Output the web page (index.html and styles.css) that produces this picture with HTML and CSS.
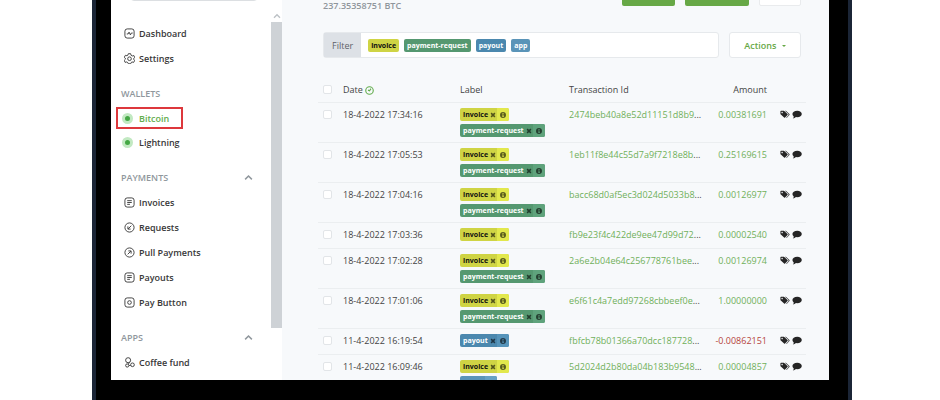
FILE: index.html
```html
<!DOCTYPE html>
<html lang="en">
<head>
<meta charset="utf-8">
<title>Bitcoin wallet</title>
<link rel="stylesheet" href="styles.css">
</head>
<body>
<svg class="defs" aria-hidden="true">
  <symbol id="i-dash" viewBox="0 0 24 24"><rect x="2" y="2" width="20" height="20" rx="5"/><path d="M6 13h3l2-4 3 6 2-4h3"/></symbol>
  <symbol id="i-gear" viewBox="0 0 24 24"><path d="M9.500 1.500h5l1 3.500 2.500 1.500 3.500-1 2 4.500-2.500 2v2l2.500 2-2.500 4.500-3.500-1-2 1.500-1 2.500h-5l-1-2.500-2.500-1.500-3.500 1-2-4.500 2.500-2.500v-2l-2.500-2 2.500-4.500 3.500 1 2-1.500z"/><circle cx="12" cy="12.500" r="4"/></symbol>
  <symbol id="i-doc" viewBox="0 0 24 24"><rect x="2" y="2" width="20" height="20" rx="5"/><path d="M7 8h10M7 12h10M7 16h6"/></symbol>
  <symbol id="i-in" viewBox="0 0 24 24"><circle cx="12" cy="12" r="10"/><path d="M16 8l-7 7M8.500 9.500v6h6"/></symbol>
  <symbol id="i-out" viewBox="0 0 24 24"><circle cx="12" cy="12" r="10"/><path d="M8 16l7-7M9.500 8.500h6v6"/></symbol>
  <symbol id="i-pay" viewBox="0 0 24 24"><rect x="2" y="2" width="20" height="20" rx="5"/><circle cx="12" cy="12" r="4"/></symbol>
  <symbol id="i-app" viewBox="0 0 24 24"><circle cx="9" cy="7" r="5.500"/><circle cx="7" cy="18.500" r="3.500"/><circle cx="18.500" cy="17" r="4"/><path d="M12 12l-3 4M11 18.500h3.500"/></symbol>
  <symbol id="i-up" viewBox="0 0 12 12"><path d="M1.500 8.500L6 4l4.500 4.500"/></symbol>
  <symbol id="i-clock" viewBox="0 0 24 24"><circle cx="12" cy="12" r="10"/><path d="M16 7l-4 6-4-2"/></symbol>
  <symbol id="i-x" viewBox="0 0 8 8"><path d="M1.500 1.500l5 5M6.500 1.500l-5 5"/></symbol>
  <symbol id="i-info" viewBox="0 0 12 12"><path fill-rule="evenodd" d="M6 0a6 6 0 1 0 0 12A6 6 0 0 0 6 0zM5 2h2v2H5zM4.500 5H7v4h1v1H4.500V9H5V6h-.5z"/></symbol>
  <symbol id="i-tags" viewBox="0 0 24 20"><path fill-rule="evenodd" d="M1 2.500Q1 1 2.500 1H9q1 0 2 1l7 7q1.200 1.200 0 2.400l-5.800 5.800q-1.200 1.200-2.400 0L2 10Q1 9 1 8zM5 3.500a1.700 1.700 0 1 0 .1 0z"/><path d="M12 1h1.500q1 0 2 1l7 7q1.200 1.200 0 2.400l-6 6.200q-1 .9-2 .1l5.300-5.300q2-2 0-4z"/></symbol>
  <symbol id="i-chat" viewBox="0 0 24 20"><path d="M12.500 1C19 1 23.500 4.200 23.500 8.700S19 16.500 12.500 16.500q-1.500 0-3-.3Q6.500 19.500 2 19.500q2-2 2.200-5Q1 12 1 8.700C1 4.200 6 1 12.500 1z"/></symbol>
</svg>
<div class="device">
<div class="screen">
  <nav class="sidebar" aria-label="Store">
    <div class="menu">
      <div class="store"></div>
      <ul>
        <li><a href="#"><svg class="ico"><use href="#i-dash"/></svg>Dashboard</a></li>
        <li><a href="#"><svg class="ico"><use href="#i-gear"/></svg>Settings</a></li>
      </ul>
      <h2>WALLETS</h2>
      <ul class="wallets">
        <li class="marked"><a class="active" href="#"><span class="dot"></span>Bitcoin</a></li>
        <li><a href="#"><span class="dot"></span>Lightning</a></li>
      </ul>
      <h2>PAYMENTS <svg class="chev"><use href="#i-up"/></svg></h2>
      <ul>
        <li><a href="#"><svg class="ico"><use href="#i-doc"/></svg>Invoices</a></li>
        <li><a href="#"><svg class="ico"><use href="#i-in"/></svg>Requests</a></li>
        <li><a href="#"><svg class="ico"><use href="#i-out"/></svg>Pull Payments</a></li>
        <li><a href="#"><svg class="ico"><use href="#i-doc"/></svg>Payouts</a></li>
        <li><a href="#"><svg class="ico"><use href="#i-pay"/></svg>Pay Button</a></li>
      </ul>
      <h2>APPS <svg class="chev"><use href="#i-up"/></svg></h2>
      <ul>
        <li><a href="#"><svg class="ico"><use href="#i-app"/></svg>Coffee fund</a></li>
      </ul>
    </div>
    <div class="scroll"><svg><use href="#i-up"/></svg><div class="thumb"></div></div>
  </nav>
  <main>
    <header>
      <p>237.35358751 BTC</p>
      <div class="buttons">
        <button class="send" aria-label="Send"></button>
        <button class="receive" aria-label="Receive"></button>
        <button class="more" aria-label="More"></button>
      </div>
    </header>
    <div class="toolbar">
      <div class="filter">
        <span class="caption">Filter</span>
        <div class="tags">
          <a class="tag invoice" href="#">invoice</a>
          <a class="tag request" href="#">payment-request</a>
          <a class="tag payout" href="#">payout</a>
          <a class="tag app" href="#">app</a>
        </div>
      </div>
      <button class="actions">Actions <span class="caret"></span></button>
    </div>
    <table>
      <colgroup><col class="c-check"><col class="c-date"><col class="c-label"><col class="c-tx"><col class="c-amount"><col class="c-icons"></colgroup>
      <thead>
        <tr><th><input type="checkbox" aria-label="Select all"></th><th>Date <svg class="clock"><use href="#i-clock"/></svg></th><th>Label</th><th>Transaction Id</th><th class="amount">Amount</th><th></th></tr>
      </thead>
      <tbody>
        <tr><td><input type="checkbox" aria-label="Select"></td><td>18-4-2022 17:34:16</td>
          <td><div class="labels"><span class="tag invoice">invoice<button aria-label="Remove"><svg><use href="#i-x"/></svg></button><a href="#" aria-label="Details"><svg><use href="#i-info"/></svg></a></span><span class="tag request">payment-request<button aria-label="Remove"><svg><use href="#i-x"/></svg></button><a href="#" aria-label="Details"><svg><use href="#i-info"/></svg></a></span></div></td>
          <td><a class="tx" href="#">2474beb40a8e52d11151d8b9</a>...</td><td class="amount plus">0.00381691</td><td class="icons"><svg><use href="#i-tags"/></svg><svg><use href="#i-chat"/></svg></td></tr>
        <tr><td><input type="checkbox" aria-label="Select"></td><td>18-4-2022 17:05:53</td>
          <td><div class="labels"><span class="tag invoice">invoice<button aria-label="Remove"><svg><use href="#i-x"/></svg></button><a href="#" aria-label="Details"><svg><use href="#i-info"/></svg></a></span><span class="tag request">payment-request<button aria-label="Remove"><svg><use href="#i-x"/></svg></button><a href="#" aria-label="Details"><svg><use href="#i-info"/></svg></a></span></div></td>
          <td><a class="tx" href="#">1eb11f8e44c55d7a9f7218e8b</a>...</td><td class="amount plus">0.25169615</td><td class="icons"><svg><use href="#i-tags"/></svg><svg><use href="#i-chat"/></svg></td></tr>
        <tr><td><input type="checkbox" aria-label="Select"></td><td>18-4-2022 17:04:16</td>
          <td><div class="labels"><span class="tag invoice">invoice<button aria-label="Remove"><svg><use href="#i-x"/></svg></button><a href="#" aria-label="Details"><svg><use href="#i-info"/></svg></a></span><span class="tag request">payment-request<button aria-label="Remove"><svg><use href="#i-x"/></svg></button><a href="#" aria-label="Details"><svg><use href="#i-info"/></svg></a></span></div></td>
          <td><a class="tx" href="#">bacc68d0af5ec3d024d5033b8</a>...</td><td class="amount plus">0.00126977</td><td class="icons"><svg><use href="#i-tags"/></svg><svg><use href="#i-chat"/></svg></td></tr>
        <tr><td><input type="checkbox" aria-label="Select"></td><td>18-4-2022 17:03:36</td>
          <td><div class="labels"><span class="tag invoice">invoice<button aria-label="Remove"><svg><use href="#i-x"/></svg></button><a href="#" aria-label="Details"><svg><use href="#i-info"/></svg></a></span></div></td>
          <td><a class="tx" href="#">fb9e23f4c422de9ee47d99d72</a>...</td><td class="amount plus">0.00002540</td><td class="icons"><svg><use href="#i-tags"/></svg><svg><use href="#i-chat"/></svg></td></tr>
        <tr><td><input type="checkbox" aria-label="Select"></td><td>18-4-2022 17:02:28</td>
          <td><div class="labels"><span class="tag invoice">invoice<button aria-label="Remove"><svg><use href="#i-x"/></svg></button><a href="#" aria-label="Details"><svg><use href="#i-info"/></svg></a></span><span class="tag request">payment-request<button aria-label="Remove"><svg><use href="#i-x"/></svg></button><a href="#" aria-label="Details"><svg><use href="#i-info"/></svg></a></span></div></td>
          <td><a class="tx" href="#">2a6e2b04e64c256778761bee</a>...</td><td class="amount plus">0.00126974</td><td class="icons"><svg><use href="#i-tags"/></svg><svg><use href="#i-chat"/></svg></td></tr>
        <tr><td><input type="checkbox" aria-label="Select"></td><td>18-4-2022 17:01:06</td>
          <td><div class="labels"><span class="tag invoice">invoice<button aria-label="Remove"><svg><use href="#i-x"/></svg></button><a href="#" aria-label="Details"><svg><use href="#i-info"/></svg></a></span><span class="tag request">payment-request<button aria-label="Remove"><svg><use href="#i-x"/></svg></button><a href="#" aria-label="Details"><svg><use href="#i-info"/></svg></a></span></div></td>
          <td><a class="tx" href="#">e6f61c4a7edd97268cbbeef0e</a>...</td><td class="amount plus">1.00000000</td><td class="icons"><svg><use href="#i-tags"/></svg><svg><use href="#i-chat"/></svg></td></tr>
        <tr><td><input type="checkbox" aria-label="Select"></td><td>11-4-2022 16:19:54</td>
          <td><div class="labels"><span class="tag payout">payout<button aria-label="Remove"><svg><use href="#i-x"/></svg></button><a href="#" aria-label="Details"><svg><use href="#i-info"/></svg></a></span></div></td>
          <td><a class="tx" href="#">fbfcb78b01366a70dcc187728</a>...</td><td class="amount minus">-0.00862151</td><td class="icons"><svg><use href="#i-tags"/></svg><svg><use href="#i-chat"/></svg></td></tr>
        <tr><td><input type="checkbox" aria-label="Select"></td><td>11-4-2022 16:09:46</td>
          <td><div class="labels"><span class="tag invoice">invoice<button aria-label="Remove"><svg><use href="#i-x"/></svg></button><a href="#" aria-label="Details"><svg><use href="#i-info"/></svg></a></span><span class="tag app">app<button aria-label="Remove"><svg><use href="#i-x"/></svg></button><a href="#" aria-label="Details"><svg><use href="#i-info"/></svg></a></span></div></td>
          <td><a class="tx" href="#">5d2024d2b80da04b183b9548</a>...</td><td class="amount plus">0.00004857</td><td class="icons"><svg><use href="#i-tags"/></svg><svg><use href="#i-chat"/></svg></td></tr>
      </tbody>
    </table>
  </main>
</div>
</div>
</body>
</html>
```
FILE: styles.css
```css
* { box-sizing: border-box; }
body {
  margin: 0;
  padding: 0 88px 0 92px;
  background: #fff;
  color: #444;
  font: 9px/13px "Open Sans", "Noto Sans", sans-serif;
  overflow: hidden;
}
.defs { position: absolute; width: 0; height: 0; }
a { color: inherit; text-decoration: none; }
button { font: inherit; margin: 0; padding: 0; border: 0; }
ul { list-style: none; margin: 0; padding: 0; }
svg { fill: none; stroke: currentColor; flex: none; }

/* Tablet bezel */
.device {
  height: 100vh;
  padding: 0 19px 20px 15px;
  background: #000;
  border: solid #1b2536;
  border-width: 0 4px;
}
.screen {
  display: flex;
  height: 100%;
  overflow: hidden;
  background: #f7f9fb;
}

/* Sidebar */
.sidebar { display: flex; width: 171px; flex: none; background: #fff; }
.menu { flex: 1; margin-top: -24px; }
.store {
  height: 25px;
  margin: 0 13px 20px 19px;
  border: 1px solid #dcdfe2;
  border-radius: 4px;
}
.menu li { position: relative; }
.menu li a {
  display: flex;
  align-items: center;
  gap: 4px;
  height: 25px;
  padding-left: 13px;
  font-weight: 600;
  color: #383838;
}
.menu .wallets { padding-bottom: 1px; }
.menu .wallets a { height: 24px; padding-left: 11px; gap: 6px; }
.menu a.active { color: #62ac4d; }
.marked::after {
  content: "";
  position: absolute;
  inset: 1px 88px 1px 5px;
  border: 2px solid #dd383c;
}
.ico { width: 11px; height: 11px; stroke-width: 2; }
.dot {
  width: 11px;
  height: 11px;
  border: 3px solid #c2e9c2;
  border-radius: 50%;
  background: #44a744;
}
.menu h2 {
  display: flex;
  align-items: center;
  justify-content: space-between;
  height: 35px;
  margin: 0;
  padding: 10px 18px 0 10px;
  font-size: 9px;
  font-weight: 600;
  color: #90979d;
}
.chev { width: 9px; height: 9px; stroke-width: 2; }
.scroll { width: 11px; height: 328px; display: flex; flex-direction: column; align-items: center; color: #bcc1c5; }
.scroll svg { width: 8px; height: 22px; padding-top: 10px; stroke-width: 2; }
.thumb { flex: 1; width: 100%; background: #ced2d6; }

/* Main column */
main { flex: 1; min-width: 0; margin-top: -18px; padding: 0 23px 0 36px; }
header, .toolbar { display: flex; justify-content: space-between; padding: 0 5px; }
header { height: 24px; margin-bottom: 26px; }
header p { margin: 17px 0 0; font-weight: 600; color: #8f969c; }
.buttons { display: flex; gap: 10px; }
.buttons button { height: 24px; border-radius: 2px; background: #67a846; }
.send { width: 53px; }
.receive { width: 64px; }
.buttons .more { width: 42px; background: #fff; border: 1px solid #e9ebed; }
.toolbar { gap: 10px; }
.filter {
  display: flex;
  flex: 1;
  height: 26px;
  background: #fff;
  border: 1px solid #e6e9ec;
  border-radius: 3px;
}
.caption { display: flex; align-items: center; padding: 0 8px; background: #dde1e6; color: #5d6268; }
.tags { display: flex; align-items: center; gap: 5px; padding-left: 7px; }
.actions {
  width: 72px;
  background: #fff;
  border: 1px solid #e6e9ec;
  border-radius: 3px;
  font-weight: 600;
  color: #67a846;
}
.caret { display: inline-block; margin-left: 3px; vertical-align: 2px; border: 2px solid transparent; border-top-color: currentColor; border-bottom: 0; }

/* Labels */
.tag {
  display: flex;
  align-items: center;
  height: 13px;
  padding: 0 3px;
  border-radius: 2px;
  overflow: hidden;
  font-size: 7px;
  font-weight: 700;
  line-height: 13px;
  color: #fff;
}
.labels { display: flex; flex-direction: column; align-items: flex-start; gap: 3px; }
.labels .tag { padding-right: 0; }
.tag button, .tag a { display: flex; align-items: center; height: 13px; background: none; color: #0009; }
.tag button { padding: 0 1px 0 2px; }
.tag button svg { width: 6px; height: 6px; stroke-width: 2; }
.tag a { padding: 0 3px; }
.tag a svg { width: 6px; height: 6px; fill: currentColor; stroke: none; }
.invoice { background: #cfd444; color: #111; }
.invoice a { background: #e2e84c; }
.request { background: #559870; }
.request a { background: #5fa37c; }
.payout { background: #4b88ae; }
.payout a { background: #5694ba; }
.app { background: #5a94b8; }
.app a { background: #66a0c4; }

/* Transactions */
table { width: 100%; margin-top: 20px; border-collapse: separate; border-spacing: 0; table-layout: fixed; }
.c-check { width: 25px; }
.c-date { width: 24%; }
.c-label { width: 109px; }
.c-amount { width: 60px; }
.c-icons { width: 39px; }
th, td { height: 26px; padding: 5px 0; border-bottom: 1px solid #ebeef0; text-align: left; vertical-align: top; white-space: nowrap; font-weight: 400; }
th { height: 25px; }
th:first-child, td:first-child { padding-left: 5px; }
input {
  appearance: none;
  display: block;
  width: 9px;
  height: 9px;
  margin: 2px 0;
  background: #fff;
  border: 1px solid #e2e5e8;
  border-radius: 2px;
}
.clock { width: 9px; height: 9px; stroke-width: 3; color: #62ac4d; vertical-align: -2px; }
.tx, .plus { color: #70b05a; }
td.amount, th.amount { text-align: right; }
.minus { color: #b6443c; }
.icons { line-height: 0; padding: 7px 0 0 13px; color: #252525; }
.icons svg { width: 10px; height: 9px; fill: currentColor; stroke: none; }
.icons svg + svg { margin-left: 2px; }
```
